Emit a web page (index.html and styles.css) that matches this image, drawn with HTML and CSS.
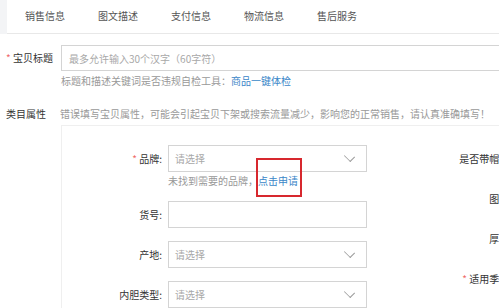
FILE: index.html
```
<!DOCTYPE html>
<html lang="zh-CN">
<head>
<meta charset="utf-8">
<link rel="stylesheet" href="styles.css">
</head>
<body>
<div class="page">
  <div class="topbar">
    <div class="strip"></div>
    <nav class="tabs">
      <span class="tab">销售信息</span>
      <span class="tab">图文描述</span>
      <span class="tab">支付信息</span>
      <span class="tab">物流信息</span>
      <span class="tab">售后服务</span>
    </nav>
  </div>

  <div class="row title-row">
    <div class="side-label"><span class="star">*</span> 宝贝标题</div>
    <div class="side-body">
      <div class="text-input wide"><span class="ph">最多允许输入30个汉字（60字符）</span></div>
      <div class="hint">标题和描述关键词是否违规自检工具：<a class="link">商品一键体检</a></div>
    </div>
  </div>

  <div class="row attr-row">
    <div class="side-label">类目属性</div>
    <div class="side-body">
      <div class="hint attr-hint">错误填写宝贝属性，可能会引起宝贝下架或搜索流量减少，影响您的正常销售，请认真准确填写！</div>
      <div class="panel">
        <div class="col-left">
          <div class="field-row">
            <div class="f-label"><span class="star">*</span> 品牌:</div>
            <div class="f-body">
              <div class="select"><span class="ph">请选择</span><span class="chev"></span></div>
              <div class="sub-hint">未找到需要的品牌，<a class="link boxed">点击申请</a></div>
            </div>
          </div>
          <div class="field-row">
            <div class="f-label">货号:</div>
            <div class="f-body"><div class="select"></div></div>
          </div>
          <div class="field-row">
            <div class="f-label">产地:</div>
            <div class="f-body"><div class="select"><span class="ph">请选择</span><span class="chev"></span></div></div>
          </div>
          <div class="field-row">
            <div class="f-label">内胆类型:</div>
            <div class="f-body"><div class="select"><span class="ph">请选择</span><span class="chev"></span></div></div>
          </div>
        </div>
        <div class="col-right">
          <div class="r-label">是否带帽子:</div>
          <div class="r-label">图案:</div>
          <div class="r-label">厚薄:</div>
          <div class="r-label"><span class="star">*</span> 适用季节:</div>
        </div>
      </div>
    </div>
  </div>
</div>
</body>
</html>
```

FILE: styles.css
```
html, body {
  margin: 0;
  padding: 0;
  overflow: hidden;
  background: #fff;
}
body {
  font-family: "Noto Sans CJK SC", "Microsoft YaHei", sans-serif;
  font-size: 10px;
  color: #333;
}
.page {
  width: 640px;
}
.topbar {
  display: flex;
  height: 34px;
}
.strip {
  width: 7px;
  background: #f3f4f6;
}
.tabs {
  flex: 1;
  display: flex;
  align-items: center;
  gap: 33px;
  padding-left: 18px;
  border-bottom: 1px solid #e8e8e8;
  color: #555;
  font-size: 10px;
  padding-bottom: 3px;
}
.tab {
  width: 40px;
  white-space: nowrap;
}
.row {
  display: flex;
}
.side-label {
  width: 55px;
  padding-left: 6px;
  white-space: nowrap;
  color: #333;
}
.star {
  color: #f06a6a;
}
.side-body {
  flex: 1;
}
.title-row {
  margin-top: 11px;
}
.title-row .side-label {
  line-height: 26px;
}
.text-input {
  height: 24px;
  border: 1px solid #d4d4d4;
  display: flex;
  align-items: center;
  padding-left: 7px;
}
.ph {
  color: #a8a8a8;
}
.hint {
  color: #999;
  line-height: 14px;
  margin-top: 3px;
  white-space: nowrap;
}
.link {
  color: #3a86c8;
}
.attr-row {
  margin-top: 19px;
}
.attr-row .side-label {
  line-height: 14px;
}
.attr-hint {
  margin-top: 0;
  margin-left: -1px;
}
.panel {
  margin-top: 4px;
  border-top: 1px solid #efefef;
  border-left: 1px solid #efefef;
  display: flex;
  padding-top: 19px;
  gap: 55px;
}
.col-left {
  display: flex;
  flex-direction: column;
  gap: 13px;
}
.field-row {
  display: flex;
  gap: 6px;
}
.f-label {
  width: 100px;
  text-align: right;
  line-height: 27px;
  white-space: nowrap;
}
.select {
  height: 25px;
  border: 1px solid #d4d4d4;
  display: flex;
  align-items: center;
  justify-content: space-between;
  padding-left: 6px;
  box-sizing: content-box;
  width: 191px;
}
.chev {
  width: 8px;
  height: 8px;
  border-right: 1px solid #9a9a9a;
  border-bottom: 1px solid #9a9a9a;
  transform: rotate(45deg) scaleY(0.75);
  margin-right: 12px;
  margin-top: -5px;
}
.sub-hint {
  color: #999;
  line-height: 14px;
  margin-top: 2px;
  white-space: nowrap;
}
.boxed {
  position: relative;
}
.boxed::after {
  content: "";
  position: absolute;
  left: -2px;
  right: -4px;
  top: -15px;
  bottom: -9px;
  border: 2px solid #d7282e;
}
.col-right {
  display: flex;
  flex-direction: column;
  gap: 13px;
}
.r-label {
  width: 90px;
  text-align: right;
  line-height: 27px;
  white-space: nowrap;
}
```
